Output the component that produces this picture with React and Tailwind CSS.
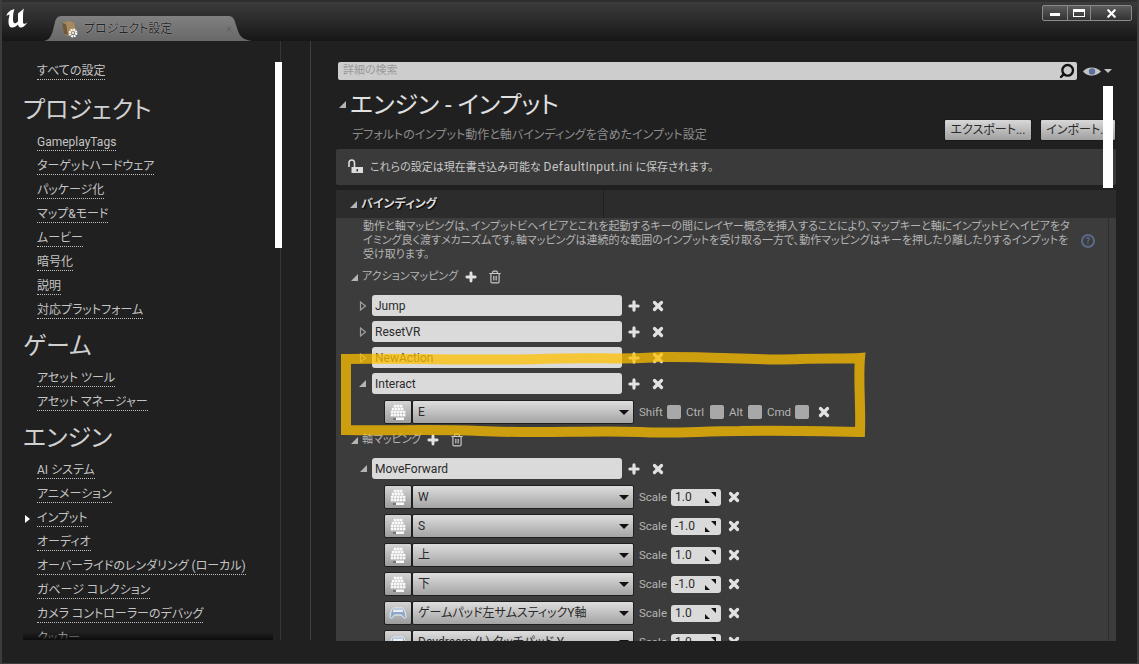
import { Plus, X, Trash2, Search } from 'lucide-react';

const sidebar = [
  { heading: 'プロジェクト', first: true, items: ['GameplayTags', 'ターゲットハードウェア', 'パッケージ化', 'マップ&モード', 'ムービー', '暗号化', '説明', '対応プラットフォーム'] },
  { heading: 'ゲーム', items: ['アセット ツール', 'アセット マネージャー'] },
  { heading: 'エンジン', items: ['AI システム', 'アニメーション', 'インプット', 'オーディオ', 'オーバーライドのレンダリング (ローカル)', 'ガベージ コレクション', 'カメラ コントローラーのデバッグ', 'クッカー'] },
];

const actions = [
  { name: 'Jump', open: false },
  { name: 'ResetVR', open: false },
  { name: 'NewAction', open: false },
  { name: 'Interact', open: true },
];

const axisRows = [
  { key: 'W', scale: '1.0' },
  { key: 'S', scale: '-1.0' },
  { key: '上', scale: '1.0' },
  { key: '下', scale: '-1.0' },
  { key: 'ゲームパッド左サムスティックY軸', scale: '1.0', pad: true },
  { key: 'Daydream (L) タッチパッド Y', scale: '1.0', pad: true },
];

function ExpandedArrow({ className = '' }) {
  return (
    <svg width="9" height="9" viewBox="0 0 9 9" className={className}>
      <path d="M8 1V8H1Z" fill="#b4b4b4" />
    </svg>
  );
}

function CollapsedArrow() {
  return (
    <svg width="8" height="10" viewBox="0 0 8 10">
      <path d="M1.5 1L6.5 5L1.5 9Z" fill="none" stroke="#a0a0a0" strokeWidth="1.2" />
    </svg>
  );
}

function KeyIcon() {
  return (
    <svg width="16" height="17" viewBox="0 0 16 17">
      {[
        [5, 1], [8, 1], [11, 1],
        [3, 4], [6, 4], [9, 4], [12, 4],
        [2, 7], [5, 7], [8, 7], [11, 7], [14, 7],
        [2, 10], [5, 10], [8, 10], [11, 10], [14, 10],
      ].map(([cx, cy]) => (
        <rect key={`${cx}-${cy}`} x={cx - 1.2} y={cy - 0.2} width="2.6" height="2.6" fill="#fafafa" />
      ))}
      <path d="M3 14H6V16H3Z" fill="#777" />
      <path d="M6 13.500H14V16H6Z" fill="#fafafa" />
    </svg>
  );
}

function PadIcon() {
  return (
    <svg width="18" height="14" viewBox="0 0 18 14">
      <path d="M5 2H13C15 2 16 5 17 10C17.400 12.500 15 13 14 11L12.500 9H5.500L4 11C3 13 .600 12.500 1 10C2 5 3 2 5 2Z" fill="#8fa9c9" stroke="#eef2f6" strokeWidth="1" />
      <path d="M4 3.500H14V6H4Z" fill="#e8eef5" />
    </svg>
  );
}

function KeyCombo({ name, pad }) {
  return (
    <div className="flex h-[24px]">
      <div className="flex w-[28px] items-center justify-center rounded-[2px] border border-[#1f1f1f] bg-gradient-to-b from-[#d4d4d4] to-[#9c9c9c]">
        {pad ? <PadIcon /> : <KeyIcon />}
      </div>
      <div className="flex w-[222px] items-center justify-between rounded-[2px] border border-[#1f1f1f] bg-gradient-to-b from-[#dedede] to-[#a4a4a4] pl-[5px] pr-[4px]">
        <span className="whitespace-nowrap text-[12px] text-[#2a2a2a]">{name}</span>
        <span className="h-0 w-0 border-x-[5px] border-t-[5px] border-x-transparent border-t-[#111]" />
      </div>
    </div>
  );
}

function TextBox({ value }) {
  return (
    <div className="flex h-[21px] w-[250px] items-center rounded-[3px] bg-[#dadada] pl-[3px] text-[12px] text-[#2a2a2a]">
      {value}
    </div>
  );
}

function RowTools() {
  return (
    <div className="ml-[5px] flex items-center gap-[10px]">
      <Plus size={14} strokeWidth={5.5} className="text-[#e2e2e2]" />
      <X size={14} strokeWidth={5.5} className="text-[#e2e2e2]" />
    </div>
  );
}

function ModCheck({ label, width }) {
  return (
    <div className="flex items-center" style={{ width }}>
      <span className="mt-px text-[11.5px] text-[#b4b4b4]">{label}</span>
      <span className="ml-auto h-[14px] w-[14px] rounded-[2px] bg-[#a8a8a8]" />
    </div>
  );
}

function GroupHeader({ label, gap, trashGap }) {
  return (
    <div className="flex h-[20px] items-center pl-[14px]">
      <ExpandedArrow />
      <span className="ml-[3px] text-[11px] text-[#b4b4b4]">{label}</span>
      <Plus size={14} strokeWidth={5} className="text-[#e2e2e2]" style={{ marginLeft: gap }} />
      <Trash2 size={14} strokeWidth={2} className="text-[#c8c8c8]" style={{ marginLeft: trashGap }} />
    </div>
  );
}

export default function App() {
  return (
    <div className="relative flex h-[664px] w-[1139px] flex-col overflow-hidden border-x-2 border-b border-[#3d3d3d] bg-[#202020] font-['Roboto','Noto_Sans_CJK_JP',sans-serif] [font-feature-settings:'palt']">
      {/* title bar */}
      <div className="flex h-[41px] shrink-0 border-t-2 border-[#2e2e2e] bg-gradient-to-b from-[#3b3b3b] via-[#2a2a2a] to-[#161616]">
        <svg width="24" height="20" viewBox="0 0 24 20" className="ml-[3px] mt-[6px] shrink-0">
          <path d="M1.500 8C2.500 4 5.500 2 9.500 1C8.500 3.500 8 6 8 11C8 14.500 9 16 11 15L13 13.500V5.500L19 .500C18 3 18 6 18 10L18 14C18 16 19.500 16.500 22.500 14.500C20 18 17.500 20 15 19.500C14 19 13.300 18 13 16.500C11 18.500 8.500 20 6.500 19.500C4 19 3.500 16 3.500 13C3.500 10 4.500 8 4.500 6.500C3.500 6.500 2.500 7 1.500 8Z" fill="#fff" />
        </svg>
        <div className="relative ml-[15px] mt-[14px] flex h-[25px] w-[208px] items-center">
          <svg width="208" height="25" viewBox="0 0 208 25" className="absolute inset-0">
            <defs>
              <linearGradient id="tabfill" x1="0" y1="0" x2="0" y2="1">
                <stop offset="0" stopColor="#808080" />
                <stop offset="1" stopColor="#686868" />
              </linearGradient>
            </defs>
            <path d="M0 25C5 24 7 21 9 14L11 6C12 2 14 0 18 0H184C188 0 190 2 191 6L194 15C196 21 200 24 208 25Z" fill="url(#tabfill)" />
          </svg>
          <svg width="18" height="18" viewBox="0 0 18 18" className="relative ml-[17px]">
            <path d="M1 3L8 1L13 3L15 12L6 16L3 14Z" fill="#a98a5e" />
            <path d="M1 3L5 4L7 15L3 14Z" fill="#6e5a3c" />
            <circle cx="12" cy="13" r="3.200" fill="none" stroke="#fff" strokeWidth="2.400" strokeDasharray="1.800 .7" />
            <circle cx="12" cy="13" r="1" fill="#fff" />
          </svg>
          <span className="relative ml-[5px] text-[12px] text-[#242424] [text-shadow:0_0_1px_#d0d0d0]">プロジェクト設定</span>
          <X size={8} strokeWidth={2} className="absolute left-[181px] top-[9px] text-[#555]" />
        </div>
        <div className="ml-auto mr-[5px] mt-[3px] flex h-[16px] rounded-[2px] border border-[#8a8a8a] bg-gradient-to-b from-[#5c5c5c] to-[#343434]">
          <div className="flex w-[25px] items-center justify-center border-r border-[#8a8a8a]">
            <span className="mt-[2px] h-[3px] w-[10px] bg-white" />
          </div>
          <div className="flex w-[23px] items-center justify-center border-r border-[#8a8a8a]">
            <span className="h-[8px] w-[12px] border border-t-[3px] border-white" />
          </div>
          <div className="flex w-[40px] items-center justify-center">
            <X size={13} strokeWidth={4} className="text-white" />
          </div>
        </div>
      </div>

      <div className="flex min-h-0 flex-1">
        {/* sidebar */}
        <div className="flex h-[599px] w-[309px] shrink-0 border-r border-[#3e3e3e]">
          <div className="relative h-[599px] w-[279px] shrink-0 overflow-hidden border-r border-[#363636] pl-[21px] pt-[19px]">
            <SidebarItem label="すべての設定" />
            {sidebar.map((group) => (
              <div key={group.heading}>
                <div className={`flex h-[44px] items-center pt-[2px] text-[24px] text-[#d0d0d0] ${group.first ? 'mt-[3px]' : ''}`}>
                  {group.heading}
                </div>
                {group.items.map((item) => (
                  <SidebarItem key={item} label={item} active={item === 'インプット'} />
                ))}
              </div>
            ))}
            <div className="absolute bottom-0 left-[21px] h-[8px] w-[250px] bg-gradient-to-b from-transparent to-[#0c0c0c]" />
          </div>
        </div>

        {/* settings */}
        <div className="flex min-w-0 flex-1 flex-col pl-[25px] pt-[21px]">
          <div className="flex h-[18px] items-center">
            <div className="ml-[2px] flex h-[18px] w-[739px] items-center justify-between rounded-[2px] bg-[#cdcdcd] pl-[5px] pr-[2px]">
              <span className="text-[11px] text-[#9a9a9a]">詳細の検索</span>
              <Search size={16} strokeWidth={3.5} className="-scale-x-100 text-[#111]" />
            </div>
            <svg width="18" height="11" viewBox="0 0 18 11" className="ml-[6px]">
              <path d="M0 5.500C4 0 13 0 18 5.500C13 11 4 11 0 5.500Z" fill="#c4c4c4" />
              <circle cx="9" cy="5.500" r="3.200" fill="#5a6f9c" />
            </svg>
            <span className="ml-[3px] h-0 w-0 border-x-[4px] border-t-[4px] border-x-transparent border-t-[#c4c4c4]" />
          </div>

          <div className="mt-[12px] flex h-[57px] w-[780px] justify-between">
            <div>
              <div className="flex h-[25px] items-center">
                <ExpandedArrow className="ml-[2px] mr-[3px]" />
                <span className="text-[24px] text-[#e0e0e0]">エンジン - インプット</span>
              </div>
              <div className="ml-[16px] mt-[9px] text-[12px] text-[#8c8c8c]">デフォルトのインプット動作と軸バインディングを含めたインプット設定</div>
            </div>
            <div className="mt-[27px] flex h-[22px] gap-[8px]">
              <ToolButton label="エクスポート..." width="w-[88px]" />
              <ToolButton label="インポート..." width="w-[76px]" />
            </div>
          </div>

          <div className="flex h-[36px] w-[780px] items-center rounded-[2px] bg-[#3a3a3a] pl-[11px]">
            <svg width="16" height="16" viewBox="0 0 16 16">
              <path d="M2 8V4C2 2 3 1 4.800 1C6.500 1 7.500 2 7.500 4V8" fill="none" stroke="#dcdcdc" strokeWidth="1.600" />
              <path d="M4.500 8H16V14H4.500Z" fill="#dcdcdc" />
              <path d="M9.500 10H11V12.500H9.500Z" fill="#3a3a3a" />
            </svg>
            <span className="ml-[7px] text-[11px] text-[#c8c8c8]">
              これらの設定は現在書き込み可能な <span className="text-[12px] tracking-[0.5px]">DefaultInput.ini</span> に保存されます。
            </span>
          </div>

          <div className="mt-[5px] flex h-[28px] w-[780px] items-center bg-[#2c2c2c]">
            <ExpandedArrow className="ml-[13px]" />
            <span className="ml-[3px] w-[242px] text-[12px] font-bold text-[#d8d8d8] [text-shadow:1px_1px_1px_#000]">バインディング</span>
            <span className="h-full border-l border-[#1f1f1f]" />
          </div>

          <div className="flex h-[423px] w-[780px] overflow-hidden bg-[#3c3c3c]">
            <div className="w-[773px] shrink-0 border-r border-[#2e2e2e]">
              <div className="relative mt-px h-[48px] pl-[27px] pt-[1px] text-[11px] leading-[14px] text-[#b4b4b4]">
                <div className="whitespace-nowrap">動作と軸マッピングは、インプットビヘイビアとこれを起動するキーの間にレイヤー概念を挿入することにより、マップキーと軸にインプットビヘイビアをタ</div>
                <div className="whitespace-nowrap">イミング良く渡すメカニズムです。軸マッピングは連続的な範囲のインプットを受け取る一方で、動作マッピングはキーを押したり離したりするインプットを</div>
                <div className="whitespace-nowrap">受け取ります。</div>
                <span className="absolute left-[745px] top-[15px] flex h-[14px] w-[14px] items-center justify-center rounded-full border-2 border-[#5b6a88] text-[9px] font-bold text-[#5b6a88]">?</span>
              </div>

              <GroupHeader label="アクションマッピング" gap="6px" trashGap="10px" />
              <div className="mt-[8px] flex flex-col gap-[5px]">
                {actions.map((action) => (
                  <div key={action.name} className="flex items-center">
                    <div className="flex w-[36px] justify-end pr-[5px]">
                      {action.open ? <ExpandedArrow /> : <CollapsedArrow />}
                    </div>
                    <TextBox value={action.name} />
                    <RowTools />
                  </div>
                ))}
              </div>
              <div className="ml-[48px] mt-[6px] flex items-center">
                <KeyCombo name="E" />
                <div className="ml-[5px] flex items-center gap-[5px]">
                  <ModCheck label="Shift" width="42px" />
                  <ModCheck label="Ctrl" width="38px" />
                  <ModCheck label="Alt" width="33px" />
                  <ModCheck label="Cmd" width="42px" />
                </div>
                <X size={14} strokeWidth={5.5} className="ml-[8px] text-[#e2e2e2]" />
              </div>

              <div className="mt-[6px]">
                <GroupHeader label="軸マッピング" gap="5px" trashGap="10px" />
              </div>
              <div className="mt-[8px] flex items-center">
                <div className="flex w-[36px] justify-end pr-[4px]">
                  <ExpandedArrow />
                </div>
                <TextBox value="MoveForward" />
                <RowTools />
              </div>
              <div className="ml-[48px] mt-[6px] flex flex-col gap-[5px]">
                {axisRows.map((row) => (
                  <div key={row.key} className="flex items-center">
                    <KeyCombo name={row.key} pad={row.pad} />
                    <span className="ml-[5px] mt-px w-[27px] text-[11.5px] text-[#b4b4b4]">Scale</span>
                    <div className="ml-[5px] flex h-[17px] w-[50px] items-center justify-between rounded-[3px] bg-[#dadada] pl-[4px] pr-[5px] text-[12px] text-[#2a2a2a]">
                      {row.scale}
                      <svg width="11" height="11" viewBox="0 0 11 11">
                        <path d="M6 0H11V5ZM0 11V6L5 11Z" fill="#111" />
                      </svg>
                    </div>
                    <X size={14} strokeWidth={5.5} className="ml-[6px] text-[#e2e2e2]" />
                  </div>
                ))}
              </div>
            </div>
          </div>
        </div>
      </div>

      {/* scroll thumbs */}
      <div className="absolute left-[273px] top-[62px] h-[186px] w-[7px] bg-white" />
      <div className="absolute left-[1101px] top-[86px] h-[102px] w-[10px] bg-white" />

      {/* hand drawn highlight */}
      <svg width="1139" height="664" viewBox="0 0 1139 664" className="pointer-events-none absolute -left-[2px] top-0">
        <path
          d="M346 430V359C420 358 470 361 540 359C590 357 630 360 660 357C710 356 760 361 800 359C825 358 845 359 860 358C858 380 861 405 860 432C820 431 780 430 740 431C700 431 675 434 640 432C590 430 540 434 480 431C430 429 390 431 346 430Z"
          fill="none"
          stroke="#fdc000"
          strokeOpacity="0.75"
          strokeWidth="10"
        />
      </svg>
    </div>
  );
}

function SidebarItem({ label, active }) {
  return (
    <div className="relative flex h-[24px] items-center">
      {active && <span className="absolute left-[2px] h-0 w-0 border-y-[4px] border-l-[5px] border-y-transparent border-l-white" />}
      <span className="ml-[14px] whitespace-nowrap border-b border-dotted border-[#c0c0c0] text-[12px] leading-[15px] text-[#c4c4c4]">{label}</span>
    </div>
  );
}

function ToolButton({ label, width }) {
  return (
    <div className={`flex items-center justify-center rounded-[2px] border border-[#1a1a1a] bg-gradient-to-b from-[#d8d8d8] to-[#a0a0a0] text-[12px] text-[#2a2a2a] ${width}`}>
      {label}
    </div>
  );
}
